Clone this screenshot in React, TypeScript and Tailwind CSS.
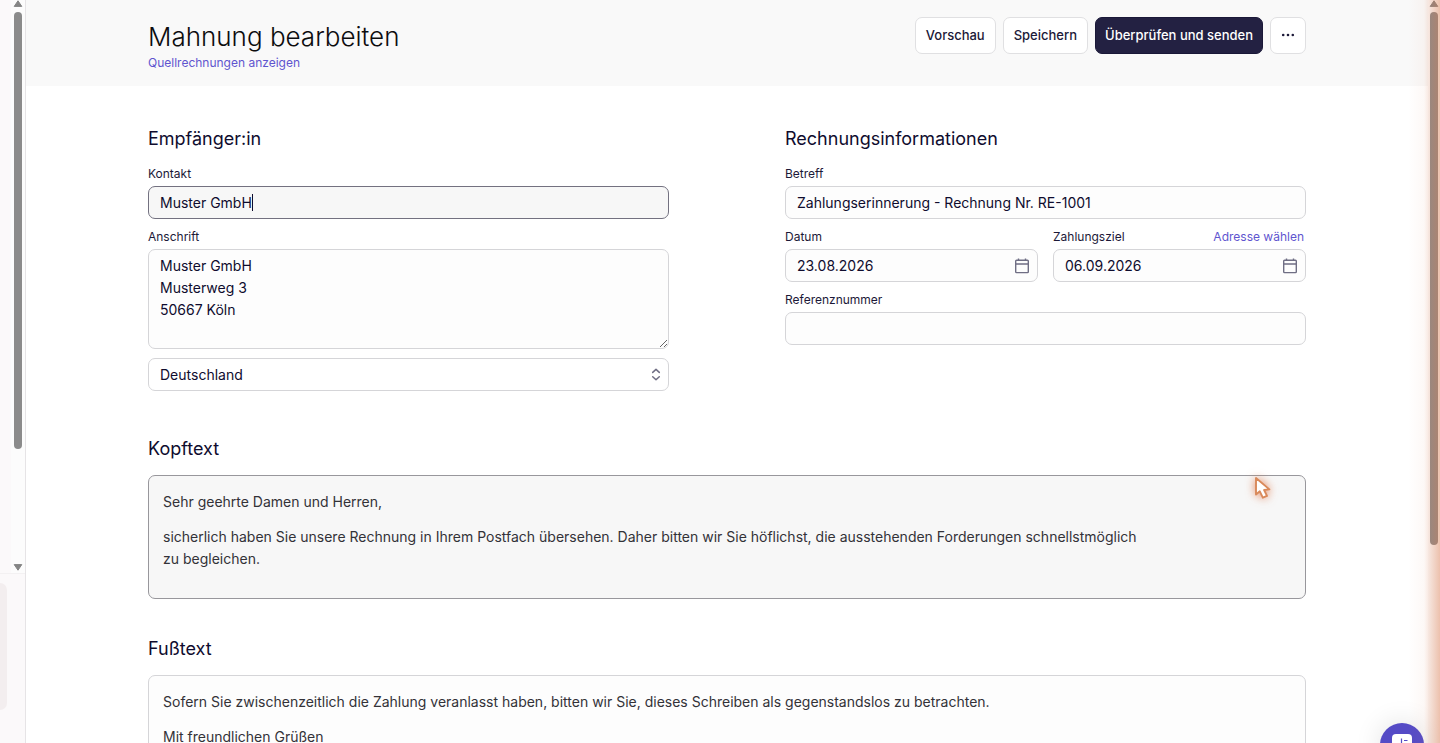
import React, { useState } from "react";
import clsx from "clsx";

const fieldBox =
  "w-full h-[33px] rounded-[7px] border border-[#d5d5d8] px-[11px] text-sm text-[#0f0c2e] outline-none";

function CalendarIcon() {
  return (
    <svg width="16" height="16" viewBox="0 0 16 16" fill="none" stroke="#6f6e84" strokeWidth="1.4">
      <rect x="1.7" y="2.2" width="12.6" height="12.4" rx="0.8" />
      <path d="M1.7 6h12.6M4.5 0.5v1.7M11.5 0.5v1.7" />
    </svg>
  );
}

function Label({ htmlFor, children }: { htmlFor: string; children: React.ReactNode }) {
  return (
    <label htmlFor={htmlFor} className="block text-xs leading-[22px] text-[#1c1938]">
      {children}
    </label>
  );
}

function SectionTitle({ children }: { children: React.ReactNode }) {
  return <h2 className="text-lg leading-8 text-[#0f0c2e]">{children}</h2>;
}

function DateField({ id, value, onChange }: { id: string; value: string; onChange: (v: string) => void }) {
  return (
    <div className={clsx(fieldBox, "flex items-center bg-[#fdfdfd]")}>
      <input
        id={id}
        value={value}
        onChange={(e) => onChange(e.target.value)}
        className="min-w-0 flex-1 bg-transparent outline-none"
      />
      <button type="button" aria-label="Kalender öffnen" className="-mr-1">
        <CalendarIcon />
      </button>
    </div>
  );
}

function Arrow({ down }: { down?: boolean }) {
  return (
    <svg width="10" height="8" viewBox="0 0 10 8" className={clsx("shrink-0", down && "rotate-180")}>
      <path d="M5 0.8 8.8 6.4H1.2z" fill="#858585" stroke="#858585" strokeLinejoin="round" />
    </svg>
  );
}

/* Left navigation, only its edge is visible */
function Sidebar() {
  return (
    <aside className="flex w-[26px] shrink-0 flex-col border-r border-[#e6e4e6] bg-[#fbf9fa]">
      <div className="flex h-[574px] justify-end border-b border-[#f3f1f2]">
        <div className="flex w-[14px] flex-col items-center bg-[#fcfcfc]">
          <Arrow />
          <div className="mt-1 h-[437px] w-2 rounded-full bg-[#8b8b8b]" />
          <div className="mt-auto mb-[2px] flex">
            <Arrow down />
          </div>
        </div>
      </div>
      <div className="mt-[9px] h-[127px] w-[7px] rounded-r-lg bg-[#f3eeef]" />
    </aside>
  );
}

function Header() {
  const button =
    "h-[37px] rounded-[7px] border border-[#e0e0e2] bg-white px-[10px] text-[13px] font-medium text-[#1c1938]";

  return (
    <header className="bg-[#f9f9f9] px-6">
      <div className="mx-auto flex h-[86px] max-w-[1158px] items-start justify-between pt-[17px]">
        <div>
          <h1 className="text-[26px] leading-[39px] font-light text-[#0c0c0e]">Mahnung bearbeiten</h1>
          <a href="#quellrechnungen" className="block text-xs leading-[14px] text-[#5f55cf]">
            Quellrechnungen anzeigen
          </a>
        </div>
        <div className="flex gap-[7px]">
          <button type="button" className={button}>
            Vorschau
          </button>
          <button type="button" className={button}>
            Speichern
          </button>
          <button
            type="button"
            className="h-[37px] rounded-[7px] border border-[#1a1838] bg-[#232142] px-[9px] text-[13px] font-medium text-white"
          >
            Überprüfen und senden
          </button>
          <button type="button" aria-label="Mehr" className={button}>
            <svg width="14" height="14" viewBox="0 0 14 14" fill="#1c1938">
              <circle cx="2.2" cy="6" r="1.3" />
              <circle cx="7" cy="6" r="1.3" />
              <circle cx="11.8" cy="6" r="1.3" />
            </svg>
          </button>
        </div>
      </div>
    </header>
  );
}

export default function App() {
  const [contact, setContact] = useState("Muster GmbH");
  const [address, setAddress] = useState("Muster GmbH\nMusterweg 3\n50667 Köln");
  const [subject, setSubject] = useState("Zahlungserinnerung - Rechnung Nr. RE-1001");
  const [date, setDate] = useState("23.08.2026");
  const [dueDate, setDueDate] = useState("06.09.2026");
  const [reference, setReference] = useState("");

  return (
    <div className="relative flex h-screen overflow-hidden bg-white font-[Inter,sans-serif]">
      <Sidebar />

      <main className="min-w-0 flex-1">
        <Header />

        <div className="px-6 pt-[37px]">
          <div className="mx-auto max-w-[1158px]">
            <div className="grid grid-cols-2 gap-[116px]">
              {/* Recipient */}
              <section>
                <SectionTitle>Empfänger:in</SectionTitle>
                <div className="mt-2 flex flex-col gap-[7px]">
                  <div className="flex flex-col gap-px">
                    <Label htmlFor="contact">Kontakt</Label>
                    <div className="flex h-[33px] items-center rounded-[7px] border border-[#737180] bg-[#f7f7f7] px-[11px] text-sm text-[#0f0c2e]">
                      <input
                        id="contact"
                        value={contact}
                        onChange={(e) => setContact(e.target.value)}
                        className="field-sizing-content bg-transparent outline-none"
                      />
                      <span className="h-[17px] w-px bg-[#0f0c2e]" />
                    </div>
                  </div>
                  <div className="flex flex-col gap-px">
                    <Label htmlFor="address">Anschrift</Label>
                    <textarea
                      id="address"
                      value={address}
                      onChange={(e) => setAddress(e.target.value)}
                      className="block h-[100px] w-full resize-y rounded-[7px] border border-[#d5d5d8] bg-[#fdfdfd] px-[11px] py-[5px] text-sm leading-[22px] text-[#0f0c2e] outline-none"
                    />
                  </div>
                  <div className="mt-[2px] grid items-center">
                    <select
                      aria-label="Land"
                      className={clsx(fieldBox, "col-start-1 row-start-1 appearance-none bg-white")}
                    >
                      <option>Deutschland</option>
                      <option>Österreich</option>
                      <option>Schweiz</option>
                    </select>
                    <svg
                      width="10"
                      height="14"
                      viewBox="0 0 10 14"
                      fill="none"
                      stroke="#6f6e84"
                      strokeWidth="1.5"
                      strokeLinecap="round"
                      strokeLinejoin="round"
                      className="pointer-events-none col-start-1 row-start-1 mr-2 justify-self-end"
                    >
                      <path d="M1.7 4.4 5 1.4l3.3 3M1.7 8.8 5 11.8l3.3-3" />
                    </svg>
                  </div>
                </div>
              </section>

              {/* Invoice details */}
              <section>
                <SectionTitle>Rechnungsinformationen</SectionTitle>
                <div className="mt-2 flex flex-col gap-[7px]">
                  <div className="flex flex-col gap-px">
                    <Label htmlFor="subject">Betreff</Label>
                    <input
                      id="subject"
                      value={subject}
                      onChange={(e) => setSubject(e.target.value)}
                      className={clsx(fieldBox, "bg-[#fdfdfd]")}
                    />
                  </div>
                  <div className="grid grid-cols-2 gap-[15px]">
                    <div className="flex flex-col gap-px">
                      <Label htmlFor="date">Datum</Label>
                      <DateField id="date" value={date} onChange={setDate} />
                    </div>
                    <div className="flex flex-col gap-px">
                      <div className="flex justify-between pr-[2px]">
                        <Label htmlFor="due">Zahlungsziel</Label>
                        <a href="#adresse" className="text-xs leading-[22px] text-[#5f55cf]">
                          Adresse wählen
                        </a>
                      </div>
                      <DateField id="due" value={dueDate} onChange={setDueDate} />
                    </div>
                  </div>
                  <div className="flex flex-col gap-px">
                    <Label htmlFor="reference">Referenznummer</Label>
                    <input
                      id="reference"
                      value={reference}
                      onChange={(e) => setReference(e.target.value)}
                      className={clsx(fieldBox, "bg-[#fdfdfd]")}
                    />
                  </div>
                </div>
              </section>
            </div>

            <section className="mt-[42px]">
              <SectionTitle>Kopftext</SectionTitle>
              <div className="mt-[10px] h-[124px] rounded-[7px] border border-[#98979c] bg-[#f7f7f7] px-[14px] py-[15px] text-sm leading-[22px] text-[#333238]">
                <div className="flex max-w-[984px] flex-col gap-[13px]">
                  <p>Sehr geehrte Damen und Herren,</p>
                  <p>
                    sicherlich haben Sie unsere Rechnung in Ihrem Postfach übersehen. Daher bitten wir Sie
                    höflichst, die ausstehenden Forderungen schnellstmöglich zu begleichen.
                  </p>
                </div>
              </div>
            </section>

            <section className="mt-[34px]">
              <SectionTitle>Fußtext</SectionTitle>
              <div className="mt-[10px] h-[124px] rounded-[7px] border border-[#d5d5d8] bg-[#fdfdfd] px-[14px] py-[15px] text-sm leading-[22px] text-[#333238]">
                <div className="flex max-w-[984px] flex-col gap-[13px]">
                  <p>
                    Sofern Sie zwischenzeitlich die Zahlung veranlasst haben, bitten wir Sie, dieses Schreiben
                    als gegenstandslos zu betrachten.
                  </p>
                  <p>Mit freundlichen Grüßen</p>
                </div>
              </div>
            </section>
          </div>
        </div>
      </main>

      {/* Page scrollbar */}
      <div className="flex w-3 shrink-0 flex-col items-center bg-[#fcfcfc]">
        <Arrow />
        <div className="mt-1 h-[533px] w-2 rounded-full bg-[#8b8b8b]" />
      </div>

      {/* Chat launcher */}
      <button
        type="button"
        aria-label="Chat öffnen"
        className="absolute right-4 -bottom-6 flex size-11 justify-center rounded-full bg-[#554bc6] pt-[11px] shadow-[0_0_28px_rgba(0,0,0,0.12)]"
      >
        <svg width="20" height="22" viewBox="0 0 20 22">
          <rect width="20" height="20" rx="4" fill="#fff" />
          <path d="M9.5 4.5v9M12 6.5h3.5M12 9.5h2" stroke="#554bc6" strokeWidth="1.2" fill="none" />
        </svg>
      </button>

      {/* Glow on the right edge */}
      <div className="pointer-events-none absolute inset-y-0 right-0 w-8 bg-linear-to-r from-[#d9784c]/0 via-[#d9784c]/5 via-50% to-[#d9784c]/45" />

      {/* Mouse pointer */}
      <svg
        width="20"
        height="26"
        viewBox="0 0 20 26"
        className="pointer-events-none absolute top-[475px] left-[1253px] drop-shadow-[0_0_5px_rgba(224,110,60,0.8)]"
      >
        <path
          d="M3 3v16.5l3.8-3.2 3 6.4 4.2-1.9-2.9-5.8 5.3-.6z"
          fill="#fff"
          stroke="#d9895a"
          strokeWidth="1.9"
          strokeLinejoin="round"
        />
      </svg>
    </div>
  );
}
